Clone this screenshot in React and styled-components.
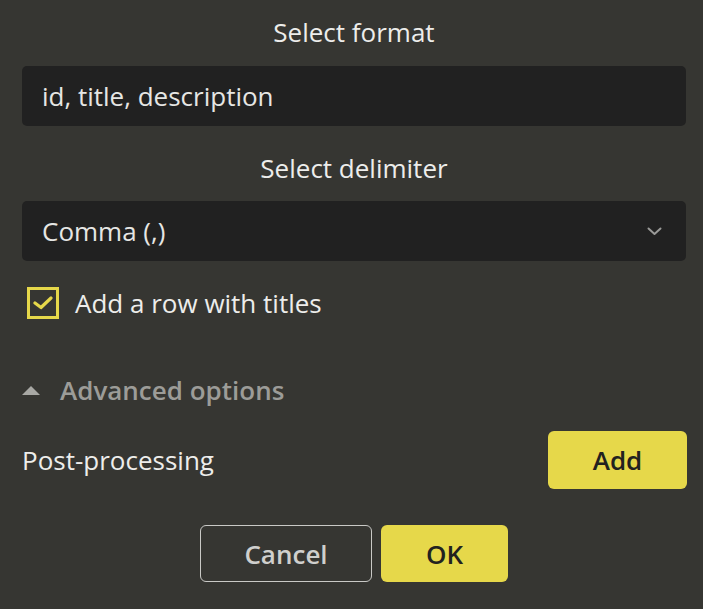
import React, { useState } from 'react';
import styled, { createGlobalStyle } from 'styled-components';

const GlobalStyle = createGlobalStyle`
  html, body {
    margin: 0;
    padding: 0;
    background: #363632;
  }
  body {
    font-family: "Open Sans", "Noto Sans", sans-serif;
    color: #ededeb;
  }
  * { box-sizing: border-box; }
`;

const Dialog = styled.div`
  display: flex;
  flex-direction: column;
  padding: 17px 17px 27px 22px;
  min-height: 609px;
`;

const Heading = styled.div`
  text-align: center;
  font-size: 26px;
  line-height: 30px;
  color: #ededeb;
  margin: ${p => p.$top || 0}px 0 ${p => p.$bottom || 19}px;
`;

const Field = styled.div`
  height: 60px;
  background: #212121;
  border-radius: 5px;
  display: flex;
  align-items: center;
  justify-content: space-between;
  padding: 0 24px 0 20px;
  font-size: 26px;
  color: #e6e6e4;
`;

const Chevron = () => (
  <svg width="15" height="9" viewBox="0 0 15 9" fill="none">
    <path d="M1.5 1.5 L7.5 7 L13.5 1.5" stroke="#9a9a98" strokeWidth="2" strokeLinecap="round" strokeLinejoin="round" />
  </svg>
);

const CheckRow = styled.label`
  display: flex;
  align-items: center;
  gap: 16px;
  margin: 24px 0 0 5px;
  font-size: 26px;
  color: #ededeb;
  cursor: pointer;
`;

const Box = styled.span`
  width: 32px;
  height: 32px;
  border: 3px solid #e6d84a;
  display: flex;
  align-items: center;
  justify-content: center;
`;

const Toggle = styled.button`
  display: flex;
  align-items: center;
  gap: 20px;
  margin-top: 51px;
  padding: 0;
  background: none;
  border: none;
  font-family: inherit;
  font-size: 26px;
  font-weight: 600;
  color: #9c9c98;
  cursor: pointer;
  align-self: flex-start;
`;

const Row = styled.div`
  display: flex;
  align-items: center;
  justify-content: space-between;
  margin: 23px -1px 0 0;
  font-size: 26px;
  color: #ededeb;
`;

const Button = styled.button`
  height: ${p => p.$h || 58}px;
  width: ${p => p.$w}px;
  border-radius: 6px;
  font-family: inherit;
  font-size: 26px;
  font-weight: 600;
  cursor: pointer;
  background: ${p => (p.$primary ? '#e6d84a' : 'transparent')};
  color: ${p => (p.$primary ? '#22221f' : '#cfcfcd')};
  border: ${p => (p.$primary ? 'none' : '1px solid #c9c9c6')};
`;

const Footer = styled.div`
  display: flex;
  justify-content: center;
  gap: 9px;
  margin-top: 36px;
`;

export default function App() {
  const [checked, setChecked] = useState(true);
  return (
    <>
      <GlobalStyle />
      <Dialog>
        <Heading>Select format</Heading>
        <Field>id, title, description</Field>
        <Heading $top={27} $bottom={18}>Select delimiter</Heading>
        <Field>
          <span>Comma (,)</span>
          <Chevron />
        </Field>
        <CheckRow onClick={() => setChecked(!checked)}>
          <Box>
            {checked && (
              <svg width="20" height="14" viewBox="0 0 20 14" fill="none">
                <path d="M2 7 L8 11.5 L18 2" stroke="#e6d84a" strokeWidth="3.2" strokeLinecap="round" strokeLinejoin="round" />
              </svg>
            )}
          </Box>
          Add a row with titles
        </CheckRow>
        <Toggle>
          <svg width="18" height="9" viewBox="0 0 18 9">
            <path d="M0 9 L9 0 L18 9 Z" fill="#a8a8a4" />
          </svg>
          Advanced options
        </Toggle>
        <Row>
          <span>Post-processing</span>
          <Button $primary $w={139}>Add</Button>
        </Row>
        <Footer>
          <Button $w={172} $h={57}>Cancel</Button>
          <Button $primary $w={127} $h={57}>OK</Button>
        </Footer>
      </Dialog>
    </>
  );
}
